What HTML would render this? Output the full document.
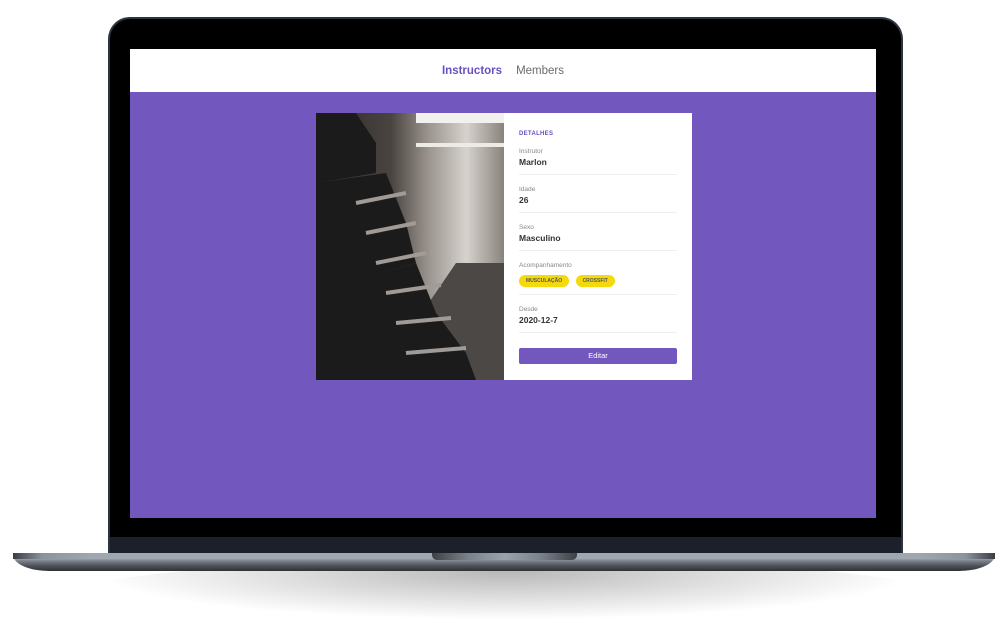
<!DOCTYPE html>
<html><head><style>
*{margin:0;padding:0;box-sizing:border-box}
body{width:1008px;height:623px;background:#fff;position:relative;overflow:hidden;font-family:"Liberation Sans",sans-serif}
.shadow{position:absolute;left:90px;top:560px;width:830px;height:60px;border-radius:50%;background:radial-gradient(ellipse at 50% 20%,rgba(0,0,0,.28),rgba(0,0,0,0) 70%)}
.bezel{position:absolute;left:108px;top:17px;width:795px;height:540px;background:#000;border:2px solid #2c3442;border-bottom:none;border-radius:22px 22px 0 0}
.chin{position:absolute;left:110px;top:537px;width:791px;height:17px;background:#1b202b}
.base{position:absolute;left:13px;top:553px;width:982px;height:18px;border-radius:2px 2px 40px 40px/2px 2px 18px 18px;background:linear-gradient(#6f757c 0,#9aa3ab 2px,#a4adb5 5px,#7a8188 8px,#4c5157 13px,#2e3237 18px)}
.base:before{content:"";position:absolute;left:0;right:0;top:0;height:6px;background:linear-gradient(90deg,#3a3e44,#8b949c 3%,#9fa8b0 8%,#9fa8b0 92%,#8b949c 97%,#3a3e44)}
.notch{position:absolute;left:432px;top:553px;width:145px;height:7px;border-radius:0 0 5px 5px;background:linear-gradient(90deg,#3d4147,#7a8289 25%,#9aa3ab 50%,#7a8289 75%,#3d4147)}
.screen{position:absolute;left:130px;top:49px;width:746px;height:469px;background:#7257bf}
.nav{height:43px;background:#fff;text-align:center;font-size:11.5px;line-height:44px}
.nav a{color:#6b6b6b;margin:0 7px;text-decoration:none}
.nav a.on{color:#6a4fbf;font-weight:bold}
.photo{position:absolute;left:186px;top:64px;width:188px;height:267px;overflow:hidden}
.card{position:absolute;left:374px;top:64px;width:188px;height:267px;background:#fff;padding:0 15px}
.h{color:#6a4fbf;font-size:6px;font-weight:bold;margin-top:18px;letter-spacing:.3px}
.f{border-bottom:1px solid #eee;padding:11px 0 7px}
.f:first-of-type{padding-top:13px}
.l{font-size:6.5px;color:#888}
.v{font-size:8.5px;color:#333;font-weight:bold;margin-top:2px}
.tag{display:inline-block;background:#f5d90a;border-radius:8px;font-size:5px;font-weight:bold;color:#555;padding:0 7px;height:12px;line-height:12px;margin:6px 2px 0 0}
.btn{margin-top:15px;height:16px;background:#7257bf;color:#fff;font-size:7.5px;text-align:center;line-height:16px;border-radius:2px}
</style></head><body>
<div class="shadow"></div>
<div class="bezel"></div>
<div class="chin"></div>
<div class="screen">
<div class="nav"><a class="on">Instructors</a><a>Members</a></div>
<div class="photo">
<svg width="188" height="267">
<defs><linearGradient id="g" x1="0" x2="1"><stop offset="0" stop-color="#2a2828"/><stop offset=".4" stop-color="#4a4441"/><stop offset=".6" stop-color="#9c958f"/><stop offset=".8" stop-color="#d6d2cd"/><stop offset="1" stop-color="#8a837d"/></linearGradient></defs>
<rect x="0" y="0" width="188" height="267" fill="url(#g)"/>
<rect x="100" y="0" width="88" height="10" fill="#f3f1ee"/>
<rect x="100" y="30" width="88" height="4" fill="#eeeae5"/>
<polygon points="60,267 188,267 188,150 140,150" fill="#4c4845"/>
<g fill="#1c1b1b">
<polygon points="0,0 40,0 60,30 60,60 0,70"/>
<polygon points="0,70 70,60 90,110 100,150 0,180"/>
<polygon points="0,180 100,150 120,200 150,240 160,267 0,267"/>
</g>
<g stroke="#a09b97" stroke-width="4">
<line x1="40" y1="90" x2="90" y2="80"/><line x1="50" y1="120" x2="100" y2="110"/><line x1="60" y1="150" x2="110" y2="140"/><line x1="70" y1="180" x2="125" y2="172"/><line x1="80" y1="210" x2="135" y2="205"/><line x1="90" y1="240" x2="150" y2="235"/>
</g>
</svg>
</div>
<div class="card">
<div class="h">DETALHES</div>
<div class="f"><div class="l">Instrutor</div><div class="v">Marlon</div></div>
<div class="f"><div class="l">Idade</div><div class="v">26</div></div>
<div class="f"><div class="l">Sexo</div><div class="v">Masculino</div></div>
<div class="f"><div class="l">Acompanhamento</div><span class="tag">MUSCULAÇÃO</span> <span class="tag">CROSSFIT</span></div>
<div class="f"><div class="l">Desde</div><div class="v">2020-12-7</div></div>
<div class="btn">Editar</div>
</div>
</div>
<div class="base"></div>
<div class="notch"></div>
</body></html>
